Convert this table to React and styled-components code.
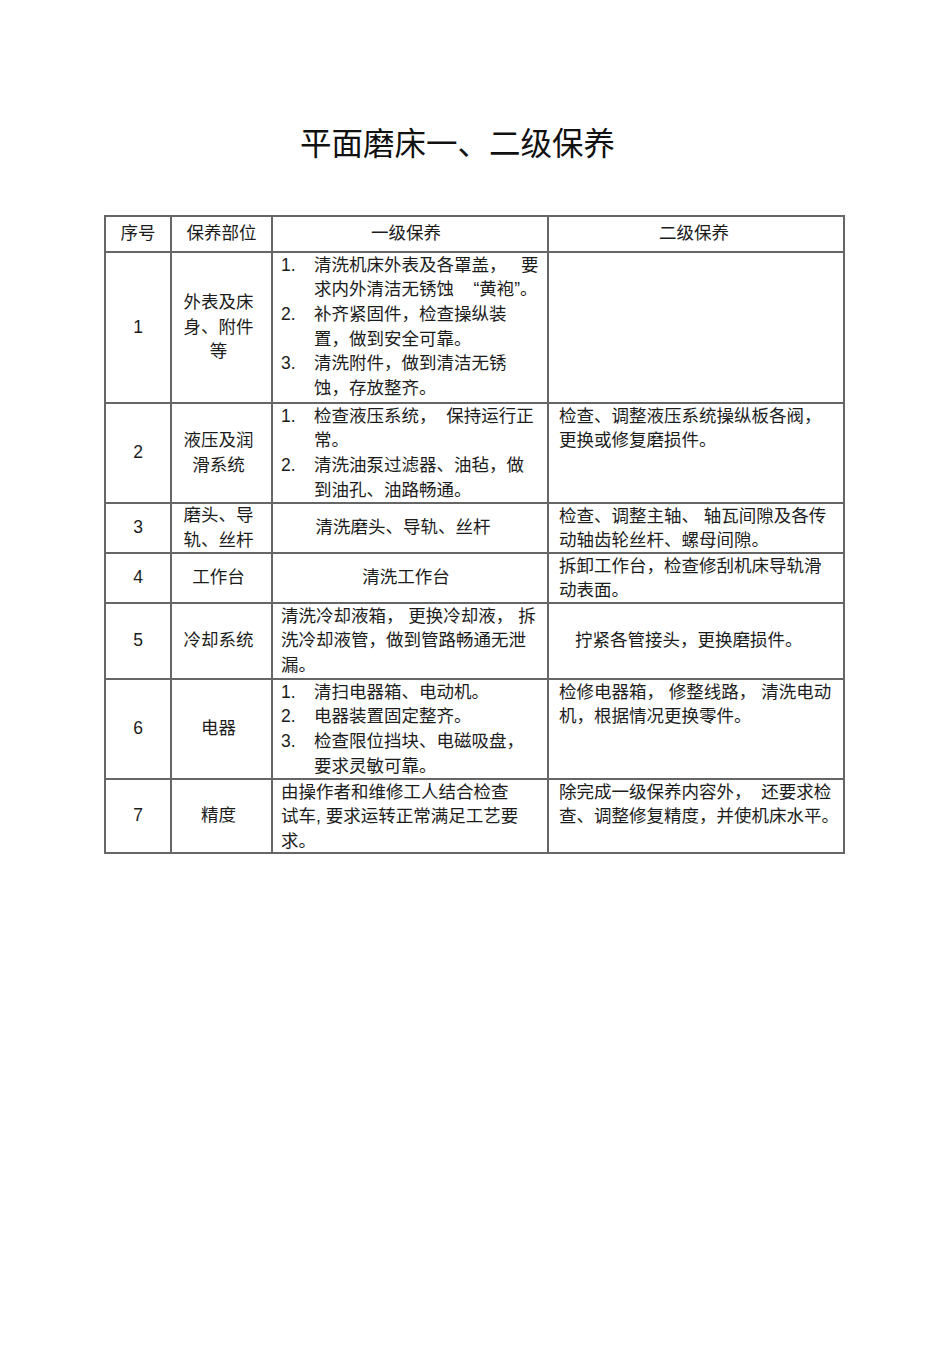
import React from "react";
import styled, { createGlobalStyle } from "styled-components";

const Global = createGlobalStyle`
  html, body { margin: 0; padding: 0; background: #fff; }
  body {
    font-family: "Liberation Sans", "Noto Sans CJK SC", sans-serif;
    color: #1c1c1c;
  }
`;

const Page = styled.div`
  width: 950px;
  min-height: 1345px;
  box-sizing: border-box;
  padding-top: 126px;
  padding-left: 104px;
`;

const Title = styled.h1`
  margin: 0 0 57px 196px;
  font-family: "Noto Sans CJK SC", sans-serif;
  font-weight: 400;
  font-size: 31.5px;
  line-height: 31.5px;
  color: #111;
  letter-spacing: 0;
`;

const Table = styled.div`
  display: grid;
  width: 741px;
  box-sizing: border-box;
  grid-template-columns: 66px 101px 276px 296px;
  grid-template-rows: 36px 151px 100px 50px 50px 76px 100px 74px;
  border-top: 2px solid #666;
  border-left: 2px solid #666;
  font-size: 17.5px;
  line-height: 24.7px;
`;

const Cell = styled.div`
  box-sizing: border-box;
  border-right: 2px solid #666;
  border-bottom: 2px solid #666;
  display: flex;
  flex-direction: column;
  justify-content: ${(p) => (p.$top ? "flex-start" : "center")};
  align-items: ${(p) => (p.$left ? "flex-start" : "center")};
  text-align: ${(p) => (p.$left ? "left" : "center")};
  padding-left: ${(p) => p.$pl ?? 0}px;
  padding-right: ${(p) => p.$pr ?? 0}px;
  padding-top: ${(p) => p.$pt ?? 0}px;
  overflow: hidden;
`;

const Line = styled.div`
  white-space: pre;
`;

const Item = styled.div`
  display: grid;
  grid-template-columns: 33px auto;
`;

const Num = styled.span`
  font-family: "Liberation Sans", sans-serif;
`;

const Body = styled.div``;

const Lines = ({ lines }) => lines.map((l, i) => <Line key={i}>{l}</Line>);

const ListItem = ({ n, lines }) => (
  <Item>
    <Num>{n}.</Num>
    <Body>
      <Lines lines={lines} />
    </Body>
  </Item>
);

export default function App() {
  return (
    <Page>
      <Global />
      <Title>平面磨床一、二级保养</Title>
      <Table>
        {/* header */}
        <Cell>序号</Cell>
        <Cell>保养部位</Cell>
        <Cell $pr={8}>一级保养</Cell>
        <Cell $pr={4}>二级保养</Cell>

        {/* row 1 */}
        <Cell>1</Cell>
        <Cell $pr={6}>
          <Lines lines={["外表及床", "身、附件", "等"]} />
        </Cell>
        <Cell $top $left $pl={8}>
          <ListItem n={1} lines={["清洗机床外表及各罩盖，   要", "求内外清洁无锈蚀    “黄袍”。"]} />
          <ListItem n={2} lines={["补齐紧固件，检查操纵装", "置，做到安全可靠。"]} />
          <ListItem n={3} lines={["清洗附件，做到清洁无锈", "蚀，存放整齐。"]} />
        </Cell>
        <Cell $top $left $pl={10} />

        {/* row 2 */}
        <Cell>2</Cell>
        <Cell $pr={6}>
          <Lines lines={["液压及润", "滑系统"]} />
        </Cell>
        <Cell $top $left $pl={8}>
          <ListItem n={1} lines={["检查液压系统，  保持运行正", "常。"]} />
          <ListItem n={2} lines={["清洗油泵过滤器、油毡，做", "到油孔、油路畅通。"]} />
        </Cell>
        <Cell $top $left $pl={10}>
          <Lines lines={["检查、调整液压系统操纵板各阀，", "更换或修复磨损件。"]} />
        </Cell>

        {/* row 3 */}
        <Cell>3</Cell>
        <Cell $pr={6}>
          <Lines lines={["磨头、导", "轨、丝杆"]} />
        </Cell>
        <Cell $pr={14}>清洗磨头、导轨、丝杆</Cell>
        <Cell $top $left $pl={10}>
          <Lines lines={["检查、调整主轴、 轴瓦间隙及各传", "动轴齿轮丝杆、螺母间隙。"]} />
        </Cell>

        {/* row 4 */}
        <Cell>4</Cell>
        <Cell $pr={6}>工作台</Cell>
        <Cell $pr={8}>清洗工作台</Cell>
        <Cell $top $left $pl={10}>
          <Lines lines={["拆卸工作台，检查修刮机床导轨滑", "动表面。"]} />
        </Cell>

        {/* row 5 */}
        <Cell>5</Cell>
        <Cell $pr={6}>冷却系统</Cell>
        <Cell $top $left $pl={8}>
          <Lines lines={["清洗冷却液箱， 更换冷却液， 拆", "洗冷却液管，做到管路畅通无泄", "漏。"]} />
        </Cell>
        <Cell $left $pl={26}>拧紧各管接头，更换磨损件。</Cell>

        {/* row 6 */}
        <Cell>6</Cell>
        <Cell $pr={6}>电器</Cell>
        <Cell $top $left $pl={8}>
          <ListItem n={1} lines={["清扫电器箱、电动机。"]} />
          <ListItem n={2} lines={["电器装置固定整齐。"]} />
          <ListItem n={3} lines={["检查限位挡块、电磁吸盘，", "要求灵敏可靠。"]} />
        </Cell>
        <Cell $top $left $pl={10}>
          <Lines lines={["检修电器箱， 修整线路， 清洗电动", "机，根据情况更换零件。"]} />
        </Cell>

        {/* row 7 */}
        <Cell>7</Cell>
        <Cell $pr={6}>精度</Cell>
        <Cell $top $left $pl={8}>
          <Lines lines={["由操作者和维修工人结合检查", "试车, 要求运转正常满足工艺要", "求。"]} />
        </Cell>
        <Cell $top $left $pl={10}>
          <Lines lines={["除完成一级保养内容外，  还要求检", "查、调整修复精度，并使机床水平。"]} />
        </Cell>
      </Table>
    </Page>
  );
}
